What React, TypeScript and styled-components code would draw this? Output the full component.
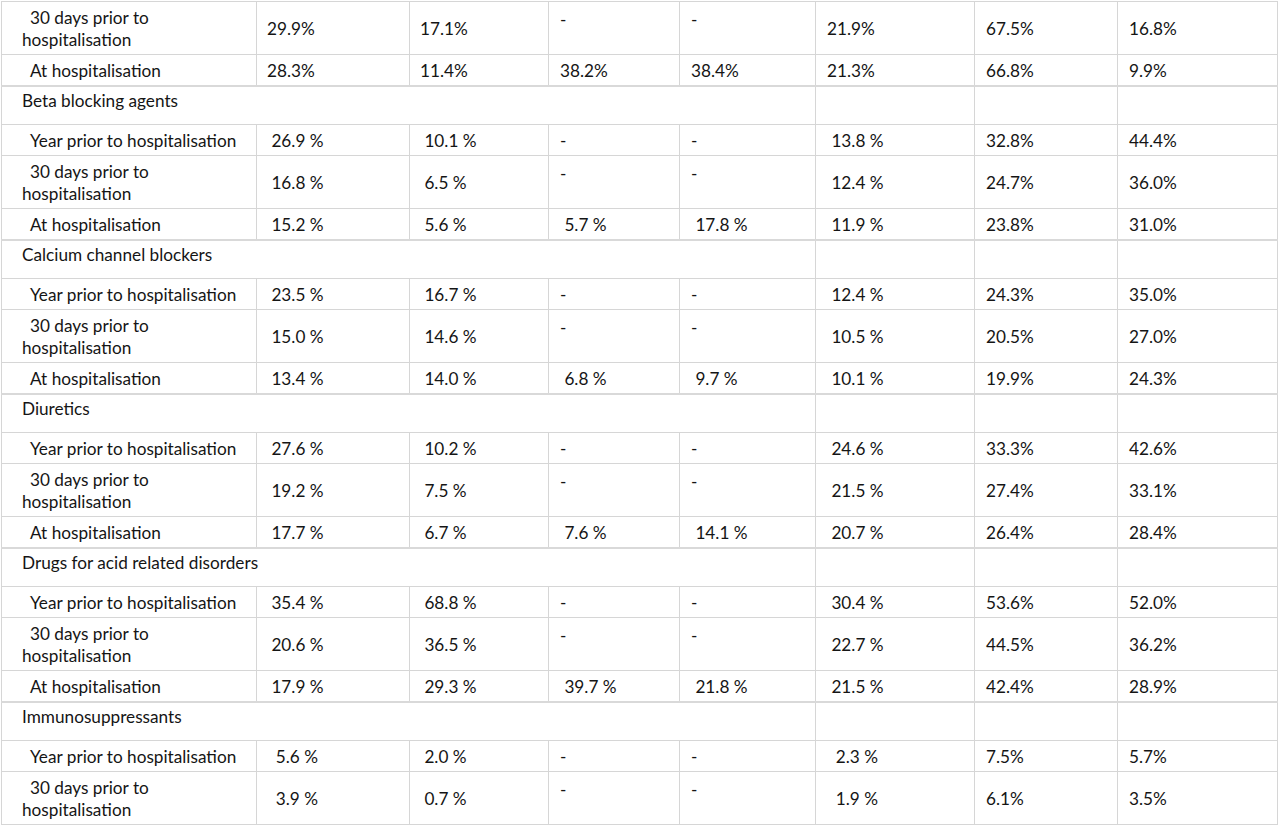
import React from "react";
import styled, { createGlobalStyle } from "styled-components";

const Global = createGlobalStyle`
  html, body { margin: 0; padding: 0; background: #ffffff; }
  body { font-family: "Lato", "Open Sans", sans-serif; color: #151515; }
`;

const Wrap = styled.div`
  padding: 1px 0 0 1px;
`;

const Table = styled.table`
  table-layout: fixed;
  border-collapse: collapse;
  width: 1276px;
  font-family: "Lato", "Open Sans", sans-serif;
  font-size: 17.2px;
  line-height: 22px;
  color: #151515;
`;

const Row = styled.tr<{ $h: number; $group?: boolean }>`
  height: ${(p) => p.$h}px;
  ${(p) => (p.$group ? "border-top: 2px solid #d9d9d9;" : "")}
`;

const Cell = styled.td<{ $top?: boolean; $pad?: number }>`
  border: 1px solid #d6d6d6;
  padding: ${(p) => (p.$top ? 7 : 2)}px 4px 0 ${(p) => p.$pad ?? 10}px;
  vertical-align: ${(p) => (p.$top ? "top" : "middle")};
  white-space: pre;
  overflow: hidden;
`;

const LabelCell = styled.td`
  border: 1px solid #d6d6d6;
  padding: 2px 4px 0 20px;
  vertical-align: middle;
  text-indent: 8px;
  white-space: nowrap;
`;

const GroupCell = styled.td`
  border: 1px solid #d6d6d6;
  padding: 3px 4px 0 20px;
  vertical-align: top;
`;

const EmptyCell = styled.td`
  border: 1px solid #d6d6d6;
`;

const Second = styled.span`
  display: block;
  text-indent: 0;
`;

const widths = [255, 153, 139, 131, 136, 159, 143, 160];

type Sub = { kind: "year" | "days" | "at"; v: string[] };
type Group = { name?: string; rows: Sub[] };

const groups: Group[] = [
  {
    rows: [
      { kind: "days", v: ["29.9%", "17.1%", "-", "-", "21.9%", "67.5%", "16.8%"] },
      { kind: "at", v: ["28.3%", "11.4%", "38.2%", "38.4%", "21.3%", "66.8%", "9.9%"] },
    ],
  },
  {
    name: "Beta blocking agents",
    rows: [
      { kind: "year", v: [" 26.9 %", " 10.1 %", "-", "-", " 13.8 %", "32.8%", "44.4%"] },
      { kind: "days", v: [" 16.8 %", " 6.5 %", "-", "-", " 12.4 %", "24.7%", "36.0%"] },
      { kind: "at", v: [" 15.2 %", " 5.6 %", " 5.7 %", " 17.8 %", " 11.9 %", "23.8%", "31.0%"] },
    ],
  },
  {
    name: "Calcium channel blockers",
    rows: [
      { kind: "year", v: [" 23.5 %", " 16.7 %", "-", "-", " 12.4 %", "24.3%", "35.0%"] },
      { kind: "days", v: [" 15.0 %", " 14.6 %", "-", "-", " 10.5 %", "20.5%", "27.0%"] },
      { kind: "at", v: [" 13.4 %", " 14.0 %", " 6.8 %", " 9.7 %", " 10.1 %", "19.9%", "24.3%"] },
    ],
  },
  {
    name: "Diuretics",
    rows: [
      { kind: "year", v: [" 27.6 %", " 10.2 %", "-", "-", " 24.6 %", "33.3%", "42.6%"] },
      { kind: "days", v: [" 19.2 %", " 7.5 %", "-", "-", " 21.5 %", "27.4%", "33.1%"] },
      { kind: "at", v: [" 17.7 %", " 6.7 %", " 7.6 %", " 14.1 %", " 20.7 %", "26.4%", "28.4%"] },
    ],
  },
  {
    name: "Drugs for acid related disorders",
    rows: [
      { kind: "year", v: [" 35.4 %", " 68.8 %", "-", "-", " 30.4 %", "53.6%", "52.0%"] },
      { kind: "days", v: [" 20.6 %", " 36.5 %", "-", "-", " 22.7 %", "44.5%", "36.2%"] },
      { kind: "at", v: [" 17.9 %", " 29.3 %", " 39.7 %", " 21.8 %", " 21.5 %", "42.4%", "28.9%"] },
    ],
  },
  {
    name: "Immunosuppressants",
    rows: [
      { kind: "year", v: ["  5.6 %", " 2.0 %", "-", "-", "  2.3 %", "7.5%", "5.7%"] },
      { kind: "days", v: ["  3.9 %", " 0.7 %", "-", "-", "  1.9 %", "6.1%", "3.5%"] },
    ],
  },
];

const pads = [10, 10, 11, 11, 11, 11, 11];

function Label({ kind }: { kind: Sub["kind"] }) {
  if (kind === "year") return <>Year prior to hospitalisation</>;
  if (kind === "at") return <>At hospitalisation</>;
  return (
    <>
      30 days prior to
      <Second>hospitalisation</Second>
    </>
  );
}

export default function App() {
  return (
    <Wrap>
      <Global />
      <Table>
        <colgroup>
          {widths.map((w, i) => (
            <col key={i} style={{ width: w }} />
          ))}
        </colgroup>
        <tbody>
          {groups.map((g, gi) => (
            <React.Fragment key={gi}>
              {g.name && (
                <Row $h={39} $group>
                  <GroupCell colSpan={5}>{g.name}</GroupCell>
                  <EmptyCell />
                  <EmptyCell />
                  <EmptyCell />
                </Row>
              )}
              {g.rows.map((r, ri) => (
                <Row key={ri} $h={r.kind === "days" ? 53 : 31}>
                  <LabelCell>
                    <Label kind={r.kind} />
                  </LabelCell>
                  {r.v.map((val, vi) => (
                    <Cell
                      key={vi}
                      $pad={pads[vi]}
                      $top={r.kind === "days" && val === "-"}
                    >
                      {val}
                    </Cell>
                  ))}
                </Row>
              ))}
            </React.Fragment>
          ))}
        </tbody>
      </Table>
    </Wrap>
  );
}
